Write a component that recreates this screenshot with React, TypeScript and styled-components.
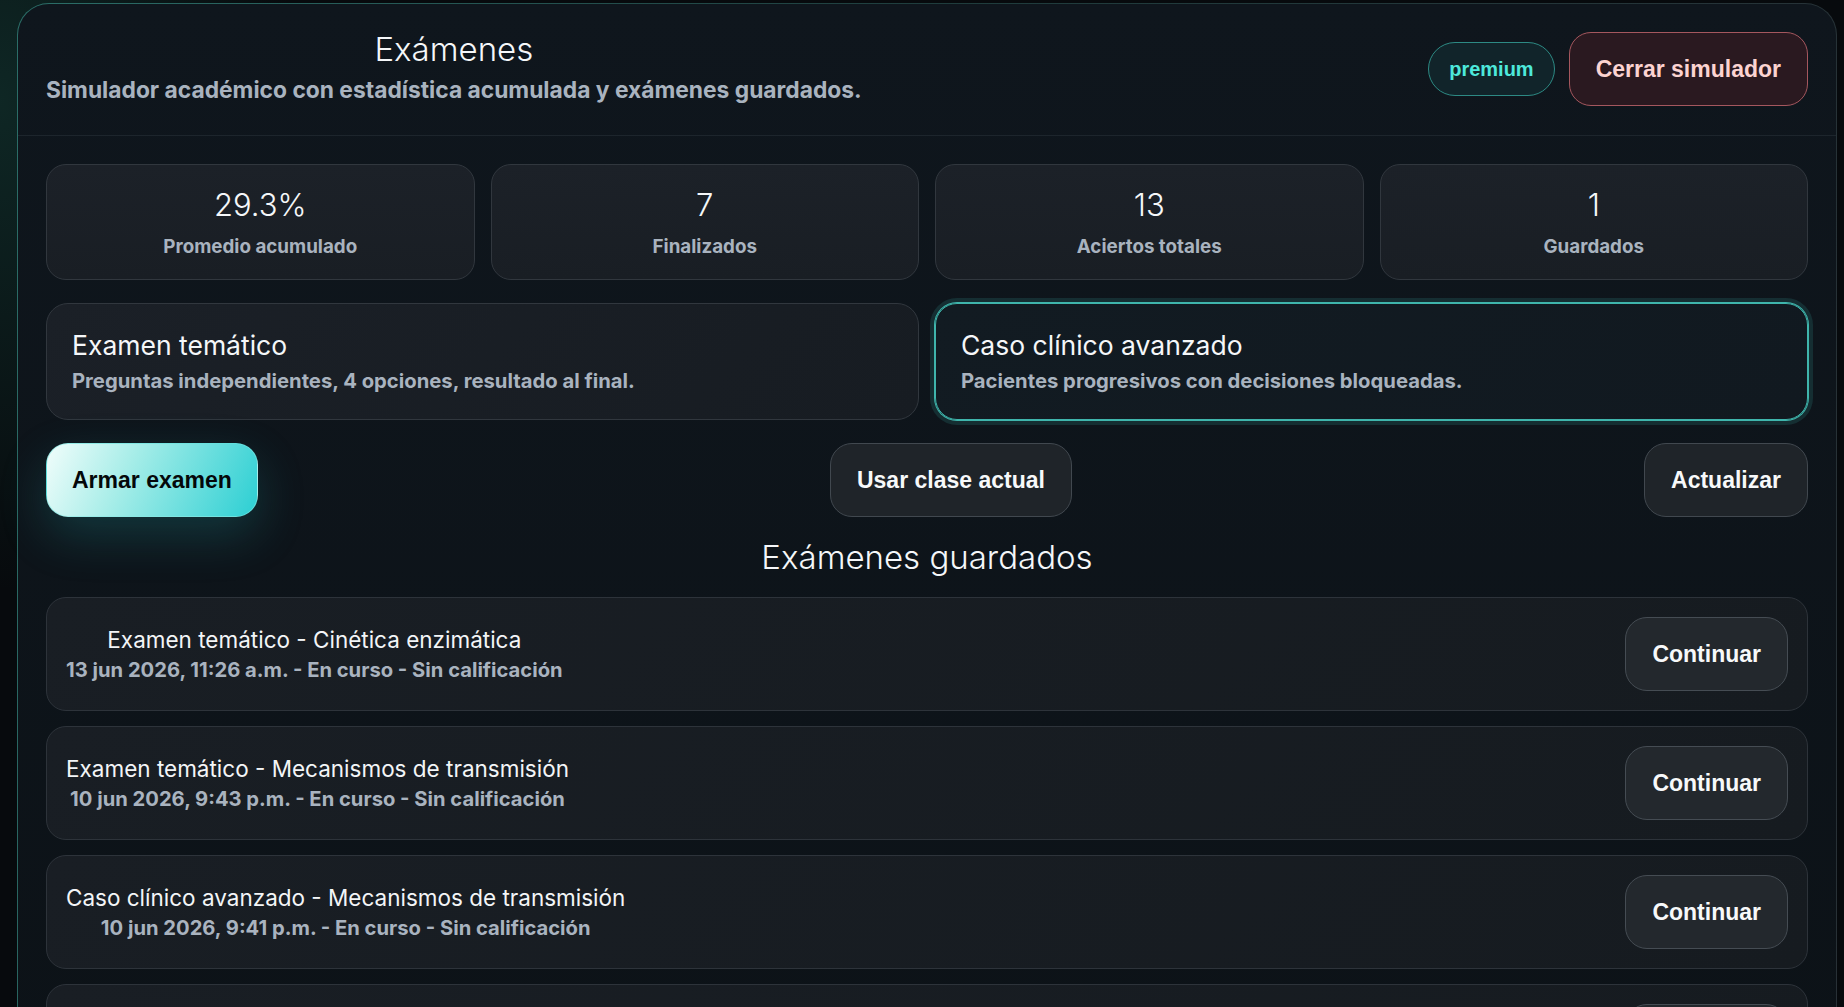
import React from "react";
import styled, { createGlobalStyle, css } from "styled-components";

const GlobalStyle = createGlobalStyle`
  *, *::before, *::after { box-sizing: border-box; }
  html, body { margin: 0; padding: 0; height: 100%; overflow: hidden; }
  body {
    background:
      radial-gradient(ellipse 420px 700px at 0% 10%, rgba(28, 92, 80, 0.35), transparent 70%),
      #070a0d;
    font-family: Inter, "Noto Sans", sans-serif;
    color: #f3f5f7;
  }
  #root { height: 100%; }
`;

const Shell = styled.div`
  height: 100vh;
  overflow: hidden;
  padding: 3px 7px 0 17px;
`;

const Panel = styled.section`
  border: 1px solid transparent;
  border-radius: 32px;
  background:
    linear-gradient(180deg, #0f161d 0%, #0c1217 100%) padding-box,
    linear-gradient(100deg, #2b6e68 0%, #1f3d3d 45%, #283036 100%) border-box;
  min-height: 1100px;
`;

const Header = styled.header`
  display: flex;
  justify-content: space-between;
  align-items: center;
  padding: 26px 28px 27px;
  border-bottom: 1px solid #1d252c;
`;

const TitleBlock = styled.div`
  display: flex;
  flex-direction: column;
  align-items: center;
  gap: 6px;
  padding-bottom: 5px;
`;

const PageTitle = styled.h1`
  margin: 0;
  font-size: 33px;
  line-height: 1.2;
  font-weight: 300;
  color: #f5f7f9;
`;

const Subtitle = styled.p`
  margin: 0;
  font-size: 22.8px;
  line-height: 1.2;
  font-weight: 700;
  color: #a9b3bf;
`;

const HeaderActions = styled.div`
  display: flex;
  align-items: center;
  gap: 14px;
`;

const Badge = styled.span`
  font-family: "Liberation Sans", Arial, sans-serif;
  font-weight: 700;
  font-size: 20px;
  line-height: 22px;
  padding: 15px 20px;
  border-radius: 999px;
  border: 1.5px solid #2d8a84;
  background: #11242a;
  color: #4de8db;
`;

type Variant = "primary" | "danger" | "default";

const Button = styled.button<{ $variant?: Variant }>`
  font-family: "Liberation Sans", Arial, sans-serif;
  font-weight: 700;
  font-size: 23px;
  line-height: 26px;
  padding: 23px 26px;
  border-radius: 22px;
  border: 1px solid #41484f;
  background: #1f2429;
  color: #f7f9fa;
  cursor: pointer;
  white-space: nowrap;
  ${(p) =>
    p.$variant === "primary" &&
    css`
      padding: 23px 25px;
      background: linear-gradient(115deg, #f1fdfb 0%, #a6ede8 38%, #2ccfd3 100%);
      border-color: rgba(120, 230, 225, 0.6);
      color: #04080a;
      box-shadow: 0 18px 48px rgba(38, 180, 185, 0.22);
    `}
  ${(p) =>
    p.$variant === "danger" &&
    css`
      background: #2a1920;
      border-color: #a5575e;
      color: #fcd3d1;
    `}
`;

const Body = styled.main`
  display: flex;
  flex-direction: column;
  gap: 23px;
  padding: 28px;
`;

const StatsGrid = styled.div`
  display: grid;
  grid-template-columns: repeat(4, 1fr);
  gap: 16px;
`;

const StatCard = styled.div`
  display: flex;
  flex-direction: column;
  align-items: center;
  gap: 13px;
  padding: 21px 16px 20px;
  border-radius: 20px;
  border: 1px solid #31373e;
  background: linear-gradient(180deg, #1c2128 0%, #191e24 100%);
`;

const StatValue = styled.div`
  font-size: 31px;
  line-height: 1.2;
  font-weight: 300;
  color: #f5f7f9;
`;

const StatLabel = styled.div`
  font-size: 18.8px;
  line-height: 1.2;
  font-weight: 700;
  color: #a9b3bf;
`;

const ModeGrid = styled.div`
  display: grid;
  grid-template-columns: repeat(2, 1fr);
  gap: 16px;
`;

const ModeCard = styled.div<{ $selected?: boolean }>`
  display: flex;
  flex-direction: column;
  gap: 8px;
  padding: 26px 25px 25px;
  border-radius: 22px;
  border: 1px solid #31373e;
  background: linear-gradient(135deg, #1b2027 0%, #171c22 100%);
  ${(p) =>
    p.$selected &&
    css`
      border-color: #3fb5ac;
      background: linear-gradient(135deg, #121b22 0%, #111920 100%);
      box-shadow: 0 0 0 1px #3fb5ac, 0 0 0 5px rgba(50, 150, 145, 0.2);
    `}
`;

const ModeTitle = styled.div`
  font-size: 26.5px;
  line-height: 1.2;
  font-weight: 400;
  color: #f5f7f9;
`;

const ModeDesc = styled.div`
  font-size: 20.25px;
  line-height: 1.2;
  font-weight: 700;
  color: #a9b3bf;
`;

const ActionRow = styled.div`
  display: flex;
  justify-content: space-between;
  align-items: center;
`;

const SectionTitle = styled.h2`
  margin: 0;
  text-align: center;
  font-size: 33px;
  line-height: 1.05;
  font-weight: 300;
  color: #f5f7f9;
`;

const SavedList = styled.div`
  display: flex;
  flex-direction: column;
  gap: 15px;
`;

const SavedItem = styled.div`
  display: flex;
  justify-content: space-between;
  align-items: center;
  padding: 19px;
  border-radius: 20px;
  border: 1px solid #2d333a;
  background: linear-gradient(135deg, #191e24 0%, #161b20 100%);
`;

const SavedText = styled.div`
  display: flex;
  flex-direction: column;
  align-items: center;
  gap: 5px;
`;

const SavedTitle = styled.div`
  font-size: 22.5px;
  line-height: 1.2;
  font-weight: 400;
  color: #f3f5f7;
`;

const SavedMeta = styled.div`
  font-size: 20.2px;
  line-height: 1.2;
  font-weight: 700;
  color: #a9b3bf;
`;

const ContinueButton = styled(Button)`
  background: #23282d;
  border-color: #454c53;
`;

const stats = [
  { value: "29.3%", label: "Promedio acumulado" },
  { value: "7", label: "Finalizados" },
  { value: "13", label: "Aciertos totales" },
  { value: "1", label: "Guardados" },
];

const modes = [
  {
    title: "Examen temático",
    desc: "Preguntas independientes, 4 opciones, resultado al final.",
    selected: false,
  },
  {
    title: "Caso clínico avanzado",
    desc: "Pacientes progresivos con decisiones bloqueadas.",
    selected: true,
  },
];

const saved = [
  {
    title: "Examen temático - Cinética enzimática",
    meta: "13 jun 2026, 11:26 a.m. - En curso - Sin calificación",
  },
  {
    title: "Examen temático - Mecanismos de transmisión",
    meta: "10 jun 2026, 9:43 p.m. - En curso - Sin calificación",
  },
  {
    title: "Caso clínico avanzado - Mecanismos de transmisión",
    meta: "10 jun 2026, 9:41 p.m. - En curso - Sin calificación",
  },
  {
    title: "Examen temático - Cinética enzimática",
    meta: "09 jun 2026, 8:15 p.m. - En curso - Sin calificación",
  },
];

export default function App() {
  return (
    <>
      <GlobalStyle />
      <Shell>
        <Panel>
          <Header>
            <TitleBlock>
              <PageTitle>Exámenes</PageTitle>
              <Subtitle>Simulador académico con estadística acumulada y exámenes guardados.</Subtitle>
            </TitleBlock>
            <HeaderActions>
              <Badge>premium</Badge>
              <Button $variant="danger">Cerrar simulador</Button>
            </HeaderActions>
          </Header>
          <Body>
            <StatsGrid>
              {stats.map((s) => (
                <StatCard key={s.label}>
                  <StatValue>{s.value}</StatValue>
                  <StatLabel>{s.label}</StatLabel>
                </StatCard>
              ))}
            </StatsGrid>
            <ModeGrid>
              {modes.map((m) => (
                <ModeCard key={m.title} $selected={m.selected}>
                  <ModeTitle>{m.title}</ModeTitle>
                  <ModeDesc>{m.desc}</ModeDesc>
                </ModeCard>
              ))}
            </ModeGrid>
            <ActionRow>
              <Button $variant="primary">Armar examen</Button>
              <Button>Usar clase actual</Button>
              <Button>Actualizar</Button>
            </ActionRow>
            <SectionTitle>Exámenes guardados</SectionTitle>
            <SavedList>
              {saved.map((s, i) => (
                <SavedItem key={i}>
                  <SavedText>
                    <SavedTitle>{s.title}</SavedTitle>
                    <SavedMeta>{s.meta}</SavedMeta>
                  </SavedText>
                  <ContinueButton>Continuar</ContinueButton>
                </SavedItem>
              ))}
            </SavedList>
          </Body>
        </Panel>
      </Shell>
    </>
  );
}
